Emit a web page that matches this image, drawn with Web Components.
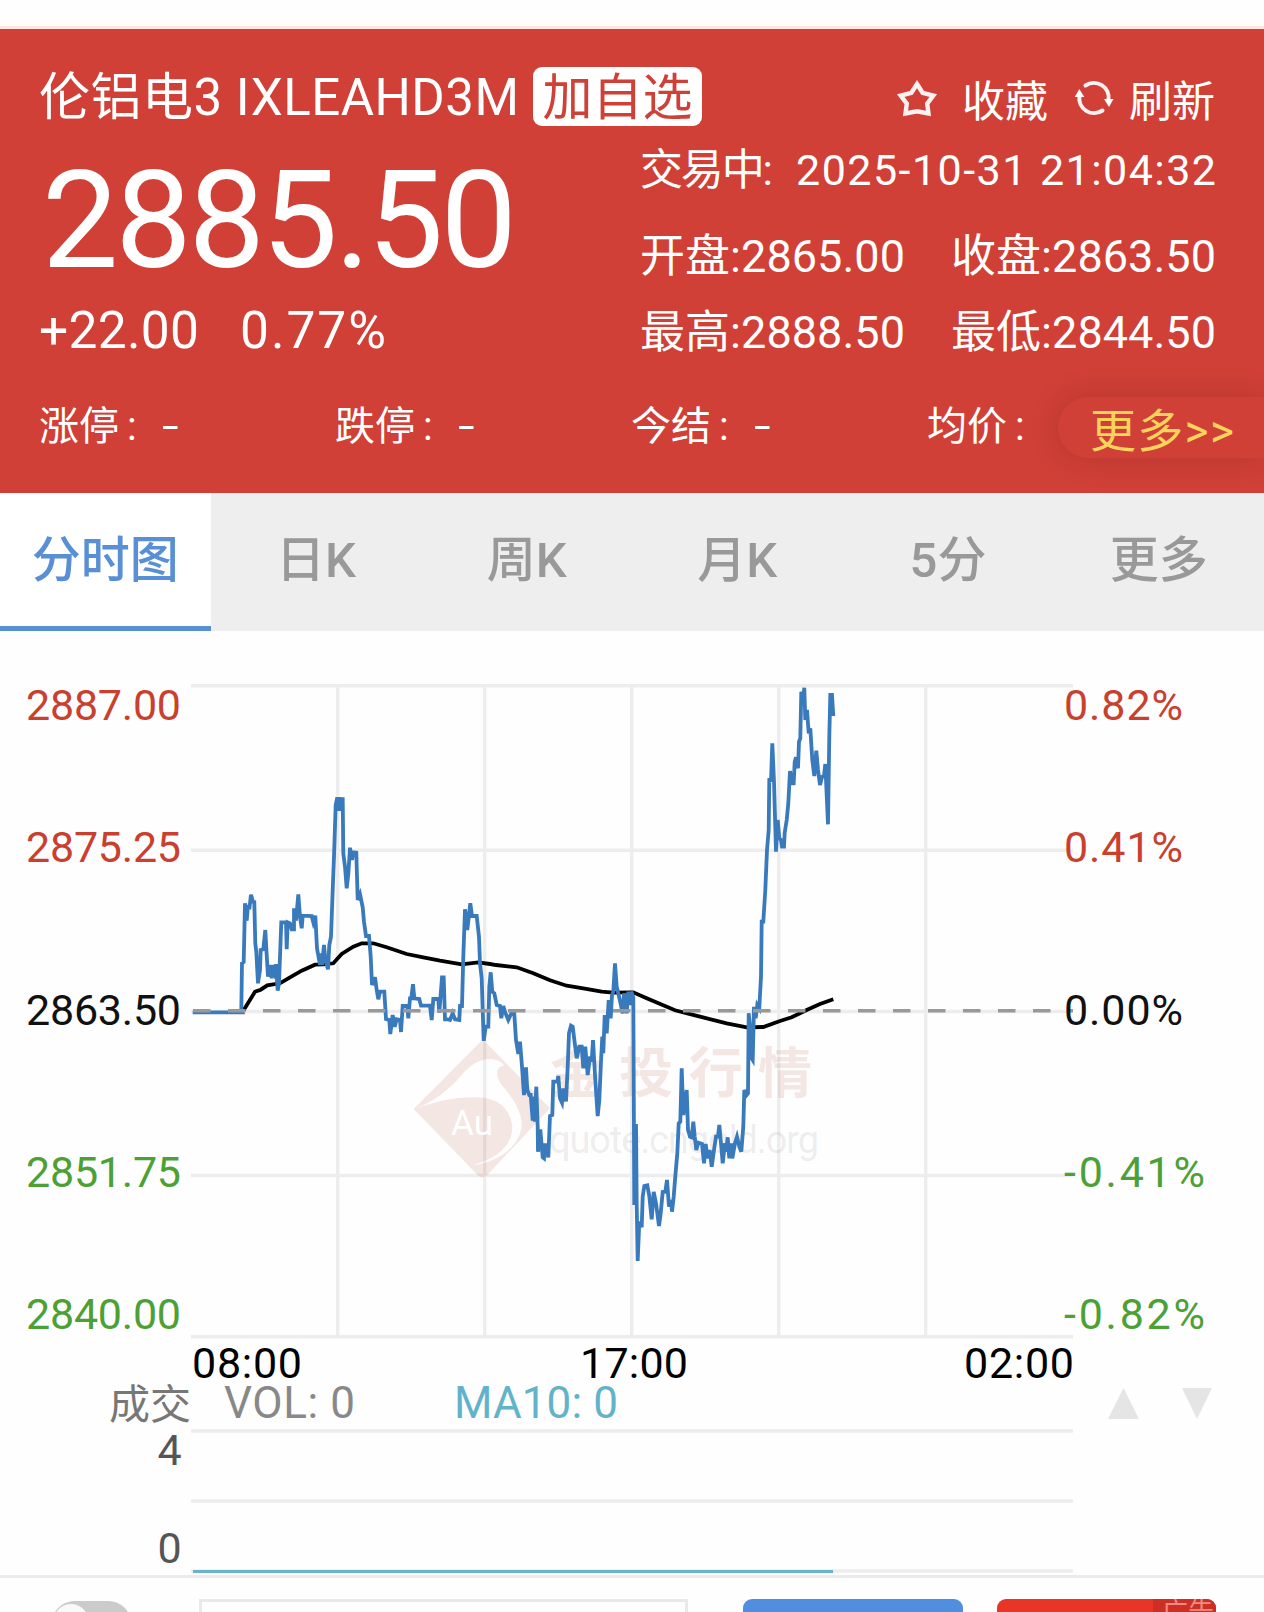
<!DOCTYPE html>
<html lang="zh-CN">
<head>
<meta charset="utf-8">
<title>伦铝电3 IXLEAHD3M</title>
<style>
  body {
    margin: 0;
    width: 1264px;
    height: 1612px;
    overflow: hidden;
    background: #fefefe;
    font-family: Roboto, "Noto Sans CJK SC", sans-serif;
  }
</style>
</head>
<body>
<quote-page></quote-page>

<script>
/**
 * <fit-text width="120"> — one line of text, tracked in or out so that it
 * fills the given width.
 */
class FitText extends HTMLElement {
  constructor() {
    super();
    this.attachShadow({ mode: 'open' }).innerHTML = `
      <style>
        :host { display: inline-block; }
        span { display: inline-block; white-space: pre; }
      </style>
      <span><slot></slot></span>
    `;
  }

  connectedCallback() {
    const target = Number(this.getAttribute('width'));
    const span = this.shadowRoot.querySelector('span');
    const count = [...this.textContent].length;
    if (!target || count < 2) return;
    const spacing = (target - span.getBoundingClientRect().width) / (count - 1);
    span.style.letterSpacing = `${spacing}px`;
    span.style.marginRight = `${-spacing}px`;
    this.style.width = `${target}px`;
    this.style.whiteSpace = 'nowrap';
  }
}

// ── Header ────────────────────────────────────────────────

class QuoteHeader extends HTMLElement {
  constructor() {
    super();
    this.attachShadow({ mode: 'open' }).innerHTML = `
      <style>
        :host {
          display: block;
          position: relative;
          box-sizing: border-box;
          height: 467px;
          margin-top: 26px;
          padding: 38px 0 0 39px;
          border-top: 3px solid #fbe6e3;
          background: #d04037;
          color: #fff;
          overflow: hidden;
        }
        .main { display: grid; grid-template-columns: 601px 576px; }
        .title { display: flex; height: 59px; line-height: 62px; font-size: 51px; }
        .badge {
          flex: none;
          width: 169px;
          margin-left: 14px;
          border-radius: 9px;
          background: #fff;
          color: #cf4037;
          font-size: 50px;
          line-height: 63px;
          text-align: center;
        }
        .price { height: 137px; margin: 26px 0 0 3px; line-height: 137px; font-size: 136px; }
        .change { display: flex; gap: 41px; margin-top: 11px; line-height: 62px; font-size: 51.5px; }
        .actions {
          display: flex;
          align-items: center;
          justify-content: flex-end;
          height: 66px;
          line-height: 66px;
          font-size: 43px;
        }
        .actions span { padding-top: 3px; margin-right: 1px; }
        .star { width: 42px; height: 40px; margin: -5px 24px 0 0; }
        .refresh { width: 40px; height: 38px; margin: -4px 15px 0 25px; }
        .time {
          display: flex;
          justify-content: space-between;
          height: 73px;
          margin-bottom: 11px;
          line-height: 74px;
          font-size: 43px;
        }
        .stats {
          display: grid;
          grid-template-columns: auto auto;
          grid-auto-rows: 76px;
          justify-content: space-between;
          line-height: 79px;
          font-size: 45px;
        }
        .limits {
          display: grid;
          grid-template-columns: repeat(4, 296px);
          margin-top: 28px;
          line-height: 59px;
          font-size: 40px;
        }
        .limits div { display: flex; white-space: pre; }
        .limits i { font-style: normal; margin-left: 8px; }
        .limits b { font-weight: 400; margin-left: 25px; transform: scaleX(1.5); transform-origin: 0 0; }
        .more {
          position: absolute;
          top: 368px;
          right: 0;
          box-sizing: border-box;
          width: 206px;
          height: 61px;
          padding-left: 32px;
          border-radius: 31px 0 0 31px;
          background: #d04037;
          box-shadow: 0 0 30px rgba(60, 0, 0, .17);
          color: #f9d35c;
          line-height: 68px;
          font-size: 46px;
        }
      </style>
      <div class="main">
        <div>
          <div class="title">
            <fit-text width="480">伦铝电3 IXLEAHD3M</fit-text>
            <span class="badge">加自选</span>
          </div>
          <div class="price"><fit-text width="475">2885.50</fit-text></div>
          <div class="change">
            <fit-text width="160">+22.00</fit-text>
            <fit-text width="146">0.77%</fit-text>
          </div>
        </div>
        <div>
          <div class="actions">
            <svg class="star" viewBox="0 0 42 40" fill="none" stroke="#fff" stroke-opacity=".93" stroke-width="4.4" stroke-linejoin="miter">
              <path d="M21 6 26.6 14.800 37.300 17.500 31.200 25.600 32.500 35.500 21 33.300 9.500 35.500 10.800 25.600 4.700 17.500 15.400 14.800Z"/>
            </svg>
            <span>收藏</span>
            <svg class="refresh" viewBox="0 0 40 38" fill="none" stroke="#fff" stroke-opacity=".93" stroke-width="4" stroke-linecap="round">
              <path d="M11.500 6.500A14.800 14.800 0 0 1 34.500 21"/>
              <path d="M28.500 31.500A14.800 14.800 0 0 1 5.500 17"/>
              <path d="M30 20h9.500l-4.500 8Z M.8 18h9.500l-5-8Z" fill="#fff" stroke="none"/>
            </svg>
            <span>刷新</span>
          </div>
          <div class="time">
            <fit-text width="133">交易中:</fit-text>
            <fit-text width="420">2025-10-31 21:04:32</fit-text>
          </div>
          <div class="stats">
            <fit-text width="265">开盘:2865.00</fit-text>
            <fit-text width="265">收盘:2863.50</fit-text>
            <fit-text width="265">最高:2888.50</fit-text>
            <fit-text width="265">最低:2844.50</fit-text>
          </div>
        </div>
      </div>
      <div class="limits">
        <div>涨停<i>:</i><b>-</b></div>
        <div>跌停<i>:</i><b>-</b></div>
        <div>今结<i>:</i><b>-</b></div>
        <div>均价<i>:</i></div>
      </div>
      <div class="more"><fit-text width="144">更多&gt;&gt;</fit-text></div>
    `;
  }
}

// ── Period tabs ───────────────────────────────────────────

class PeriodTabs extends HTMLElement {
  constructor() {
    super();
    const tabs = ['分时图', '日K', '周K', '月K', '5分', '更多'];
    this.attachShadow({ mode: 'open' }).innerHTML = `
      <style>
        :host {
          display: grid;
          grid-template-columns: repeat(6, 1fr);
          grid-template-rows: 138px;
          height: 138px;
          background: #eee;
          color: #999;
          font-size: 49px;
          font-weight: 500;
          line-height: 135px;
          text-align: center;
        }
        div { box-sizing: border-box; height: 138px; }
        .active { background: #fff; border-bottom: 5px solid #588fd5; color: #588fd5; }
      </style>
      ${tabs.map((tab, i) => `<div class="${i === 0 ? 'active' : ''}">${tab}</div>`).join('')}
    `;
  }
}

// ── Price chart ───────────────────────────────────────────

// Each run is [originX, originY, points], points in thirds of a pixel
const PRICE_RUNS = [
  [180, 670, '38,1027 187,1027 184,1020 186,880 191,876 195,700 200,752 204,705 208,718 213,674 219,695 223,696 226,820 229,845 234,940 240,900 242,840 250,838 256,780 259,835 264,920 270,885 275,925 280,885 288,925 288,882 293,962 297,940 304,757 318,757 320,838 323,757 330,760 335,778 342,778 342,715 348,752 355,673 360,740 365,775 368,737 395,738 400,757 406,737 411,835 420,885 420,850 426,885 432,825 436,870 444,898 448,825 453,800 458,660 462,560 467,405 472,382 474,422 478,382 482,422 488,382 490,550 495,590 500,655 505,612 510,533 516,570 520,547 529,548 533,690 540,673 548,712 552,755 558,798 567,798 572,860 576,945 585,922 590,960 595,988 600,965 613,965 618,1047 628,1050 631,1092 638,1035 644,1070 650,1048 660,1050 663,1086 668,1008 682,1008 685,1045 690,985 694,985 699,943 703,985 718,987 723,1007 750,1007 755,1050 760,987 775,987 778,1028 786,922 791,922 795,1048 803,1048 810,1050 818,1030 825,1048 838,1050 840,1008 846,1008 850,860 855,718 862,780 871,700 876,738 890,738 897,800 900,880 905,925 911,1113 917,1070 925,1070 928,950 932,907'],
  [400, 880, '272,277 277,335 283,340 290,375 300,378 304,415 310,378 316,398 325,420 333,402 343,402 348,480 355,522 360,485 366,560 372,645 378,562 382,630 388,645 392,645 398,722 404,650 404,725 409,620 413,740 414,815 421,748 428,832 432,835 436,790 445,832 450,708 457,705 460,605 472,605 475,588 480,655 486,668 490,625 498,664 503,560 507,460 513,437 518,440 525,495 530,535 538,500 545,500 550,565 556,500 563,585 570,530 575,545 579,480 586,600 593,708 598,660 603,545 607,470 610,520 614,405 620,460 626,360 632,415 636,345 640,335 645,250 650,320 656,345 668,400 672,340 680,400 685,335 690,375 694,335 700,352'],
  [600, 940, '100,172 103,795 108,552 110,795 113,963 118,845 125,862 128,770 133,738 142,736 148,768 155,838 161,756 168,790 177,858 182,820 188,756 196,755 201,720 207,800 213,780 216,815 221,770 225,720 232,640 236,550 241,545 245,385 250,525 260,450 264,570 270,590 275,592 280,545 284,590 289,630 295,608 306,612 312,670 317,612 323,655 329,630 335,680 342,630 348,590 354,590 358,555 362,600 368,670 375,610 378,635 383,592 388,655 394,610 397,655 405,610 411,590 418,620 424,635 430,560 433,450 440,465 444,460 446,220 452,280 452,350 458,360 462,200 467,235 472,195 478,205 483,110'],
  [700, 670, '183,920 185,755 190,755 196,660 201,540 206,480 208,325 213,335 217,220 222,335 228,545 233,450 238,505 243,510 246,530 252,530 254,488 260,450 265,400 270,303 275,340 281,340 284,275 288,262 294,295 297,215 301,205 304,65 309,90 313,53 316,150 321,120 326,190 331,175 337,270 343,318 349,242 354,300 360,345 366,320 372,318 376,282 384,463 388,200 391,75 396,75 400,138'],
];

const AVERAGE_RUNS = [
  [180, 670, '190,1022 225,965 242,959 262,946 300,940 325,925 365,902 405,884 430,883 460,880 485,852 520,830 545,820 580,820 620,832 680,852 730,862 780,872 845,883 895,877 930,882'],
  [400, 880, '288,255 350,262 400,280 450,301 500,317 550,325 605,335 640,338 695,337'],
  [600, 940, '100,157 140,175 225,211 300,230 380,250 440,262 490,261 540,243 575,232 620,210 660,192 700,178'],
];

const toPoints = (runs) => runs
  .flatMap(([ox, oy, points]) => points.split(' ').map((pair) => {
    const [x, y] = pair.split(',').map(Number);
    return `${(ox + x / 3).toFixed(1)},${(oy + y / 3).toFixed(1)}`;
  }))
  .join(' ');

class PriceChart extends HTMLElement {
  constructor() {
    super();
    const up = '#c9402f';
    const flat = '#111';
    const down = '#4ba036';
    const rows = [
      { y: 720, price: '2887.00', rate: '0.82%', color: up },
      { y: 862, price: '2875.25', rate: '0.41%', color: up },
      { y: 1025, price: '2863.50', rate: '0.00%', color: flat },
      { y: 1187, price: '2851.75', rate: '-0.41%', color: down },
      { y: 1329, price: '2840.00', rate: '-0.82%', color: down },
    ];

    this.attachShadow({ mode: 'open' }).innerHTML = `
      <style>
        :host { display: block; height: 749px; }
        svg { display: block; overflow: visible; }
        text { font-size: 43px; }
        .grid { stroke: #ededed; stroke-width: 3.4; }
        .line { fill: none; stroke-width: 3.8; }
      </style>
      <svg width="1264" height="749" viewBox="0 631 1264 749">
        <g class="grid">
          ${[685.7, 850.3, 1011.5, 1175.5, 1336.7].map((y) => `<path d="M191 ${y}H1073"/>`).join('')}
          ${[337.7, 484.7, 631.7, 778.7, 925.7].map((x) => `<path d="M${x} 686V1337"/>`).join('')}
        </g>
        ${this.#watermark()}
        <polyline class="line" stroke="#000" points="${toPoints(AVERAGE_RUNS)}"/>
        <polyline class="line" stroke="#397abd" points="${toPoints(PRICE_RUNS)}"/>
        <path d="M193 1010.7H1073" stroke="#999" stroke-width="3.4" stroke-dasharray="17.5 17.5"/>
        ${rows.map((r) => `
          <text x="26" y="${r.y}" fill="${r.color}" textLength="155">${r.price}</text>
          <text x="1064" y="${r.y}" fill="${r.color}" textLength="${r.rate.length > 5 ? 141 : 119}">${r.rate}</text>
        `).join('')}
        <text x="192" y="1378" textLength="110">08:00</text>
        <text x="580" y="1378" textLength="108">17:00</text>
        <text x="964" y="1378" textLength="110">02:00</text>
      </svg>
    `;
  }

  #watermark() {
    return `
      <g fill="#a83c22" fill-opacity=".12">
        <path transform="translate(405 1030) scale(.3333)" fill-rule="evenodd" d="M26 237 222 40Q232 32 245 40L435 235 245 437Q232 445 220 437Z
          M28 237C90 215 140 170 165 140 200 100 230 82 265 88Q290 92 297 107C275 108 268 135 290 165 320 200 350 240 350 285 348 340 290 395 205 405 280 385 322 345 322 290 315 235 280 205 220 202 150 200 90 215 28 237Z"/>
        <text x="550" y="1093" font-weight="700" style="font-size:54px" textLength="262">金投行情</text>
      </g>
      <text x="451" y="1135" fill="#fff" textLength="42" style="font-size:35px">Au</text>
      <text x="549" y="1153" fill="#000" fill-opacity=".085" textLength="270" style="font-size:38px">quote.cngold.org</text>
    `;
  }
}

// ── Volume panel ──────────────────────────────────────────

class VolumePanel extends HTMLElement {
  constructor() {
    super();
    this.attachShadow({ mode: 'open' }).innerHTML = `
      <style>
        :host { display: block; height: 195px; }
        svg { display: block; overflow: visible; }
        text { font-size: 43px; }
      </style>
      <svg width="1264" height="195" viewBox="0 1380 1264 195">
        <text x="109" y="1419" fill="#777" textLength="82" style="font-size:41px">成交</text>
        <text x="224" y="1417.5" fill="#888" textLength="131" style="font-size:44px">VOL: 0</text>
        <text x="454" y="1417.5" fill="#62b3ca" textLength="164" style="font-size:44px">MA10: 0</text>
        <path d="M1108 1419h31l-15.5-31Z M1182 1388h30l-15 31Z" fill="#e5e5e5"/>
        <path d="M191 1431H1073M191 1501H1073M191 1571H1073" stroke="#ededed" stroke-width="3.4"/>
        <path d="M193 1571.5H833" stroke="#6ab4c4" stroke-width="3"/>
        <text x="157.5" y="1465" fill="#555">4</text>
        <text x="157.5" y="1562.5" fill="#555">0</text>
      </svg>
    `;
  }
}

// ── Bottom bar ────────────────────────────────────────────

class BottomBar extends HTMLElement {
  constructor() {
    super();
    this.attachShadow({ mode: 'open' }).innerHTML = `
      <style>
        :host {
          display: flex;
          align-items: flex-start;
          box-sizing: border-box;
          height: 90px;
          padding: 21px 0 0 52px;
          border-top: 3px solid #ebebeb;
        }
        .switch { width: 79px; height: 45px; margin: 2px 68px 0 0; border-radius: 23px; background: #cbcbcb; }
        .switch::before {
          content: "";
          display: block;
          width: 36px;
          height: 38px;
          margin: 0 0 0 1px;
          border-radius: 50%;
          background: #f9f9f9;
          transform: translateY(3px);
        }
        .field { box-sizing: border-box; width: 489px; height: 70px; margin-right: 55px; border: 3px solid #e9e9e9; }
        .button { height: 70px; border-radius: 9px; overflow: hidden; }
        .blue { width: 220px; margin-right: 34px; background: #518ee0; }
        .red { display: flex; justify-content: flex-end; width: 219px; background: #e93528; }
        .ad {
          box-sizing: border-box;
          width: 63px;
          height: 34px;
          padding-left: 9px;
          background: #cd2f24;
          color: #ee8a82;
          font-size: 26px;
          line-height: 26px;
        }
      </style>
      <div class="switch"></div>
      <div class="field"></div>
      <div class="button blue"></div>
      <div class="button red"><span class="ad">广告</span></div>
    `;
  }
}

class QuotePage extends HTMLElement {
  constructor() {
    super();
    this.attachShadow({ mode: 'open' }).innerHTML = `
      <style>
        :host { display: flow-root; height: 1612px; overflow: hidden; }
      </style>
      <quote-header></quote-header>
      <period-tabs></period-tabs>
      <price-chart></price-chart>
      <volume-panel></volume-panel>
      <bottom-bar></bottom-bar>
    `;
  }
}

customElements.define('fit-text', FitText);
customElements.define('quote-header', QuoteHeader);
customElements.define('period-tabs', PeriodTabs);
customElements.define('price-chart', PriceChart);
customElements.define('volume-panel', VolumePanel);
customElements.define('bottom-bar', BottomBar);
customElements.define('quote-page', QuotePage);
</script>
</body>
</html>
